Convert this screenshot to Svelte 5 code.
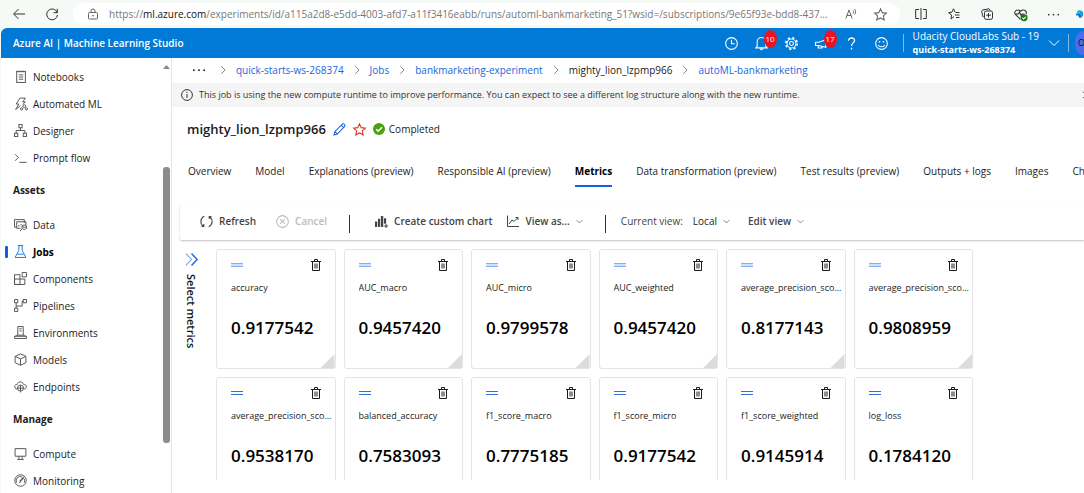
<script>
  const icons = {
    notebook: '<rect x="2.5" y="1.5" width="8" height="10"/><path d="M2.5 .8v1.2M4.5.5v1.5M6.500.5v1.5M8.500.5v1.5M10.5.8v1.2M4.500 4.500h4M4.500 6.500h4M4.500 8.500h4"/>',
    automl: '<path d="M5.500 1h5L8 4.500h2.500L8 7M5.500 1L2 6.500h2.500L1.500 11.500 6 8"/><circle cx="9.500" cy="8.500" r="1.300"/><circle cx="7" cy="11" r="1"/><circle cx="11.500" cy="11" r="1"/>',
    designer: '<rect x="4.500" y=".5" width="3" height="3"/><rect x=".5" y="8.500" width="3" height="3"/><rect x="8.500" y="8.500" width="3" height="3"/><path d="M6 3.500v2.500M2 8.500V6h8v2.500"/>',
    prompt: '<path d="M1 3l3 3-3 3M5 10.500h6.500"/>',
    data: '<path d="M2.500 8.500H.500v-7h9v3M2.500 3.500h8.500v3M2.500 3.500v6H6M4.500 8V6.500M6.500 7V5.500"/><ellipse cx="9.500" cy="7.500" rx="2" ry="1"/><path d="M7.500 7.500v2c0 1.300 4 1.300 4 0v-2M7.500 10L5.500 12"/>',
    jobs: '<path d="M3.500.500h5M4.500.500v4.500L1 11.500h10L7.500 5V.5M3 8.500h6"/>',
    components: '<path d="M.5 2.500h5v9h-5zM.5 6.500h9.500v5H.5zM7.500.500h4v4h-4z"/>',
    pipelines: '<path d="M.5.500h3v3h-3zM8.500.500h3v3h-3zM.5 8.500h3v3h-3zM2 3.500v5M2 6.500h5.500V2h1"/>',
    environments: '<path d="M3.500.500h5v8h-5zM5 2.500h2M5 4.500h2M3.500 8.500L1 9.500M8.500 8.500l2.500 1M.5 9.500h11v2H.5z"/>',
    models: '<path d="M6 .8l5 2.300v5.800L6 11.300 1 8.900V3.100zM1 3.100l5 2.400 5-2.400M6 5.500v5.800"/>',
    endpoints: '<path d="M3 8.500C-.2 8-.2 4.200 2.800 4.200 3.500 1 8 1 8.800 4c3.200 0 3.600 3.800.5 4.500"/><circle cx="6" cy="7.500" r="2.800"/><path d="M3.200 7.500h5.600M6 5v5M6 10.300v1.200"/>',
    compute: '<path d="M1 1.500h10v7H1zM4.500 8.500v2.500M7.500 8.500v2.500M3 11.500h6"/>',
    monitoring: '<circle cx="6" cy="6" r="5.300"/><path d="M2.500 8a3.800 3.800 0 0 1 5-5.300M9.400 4.500A3.800 3.800 0 0 1 9.500 8"/><path d="M5.500 7L9 3M5 7.500l1 .3" stroke-width="1.400"/>',
    back: '<path d="M12 6H.8M5.500 1L.7 6l4.800 5"/>',
    reload: '<path d="M11.200 4.500A5.400 5.400 0 1 0 11.500 7M11.300.8v3.900H7.500"/>',
    lock: '<rect x="1.500" y="4.500" width="9" height="6.500" rx="1"/><path d="M4 4.500V3a2 2 0 0 1 4 0v1.500"/><circle cx="6" cy="7.700" r=".5"/>',
    read: '<path d="M.8 10.500L4 2l3.200 8.500M2 7.500h4M8 2.500c.8.800.8 2 0 3M9.500 1c1.500 1.500 1.500 4 0 5.500"/>',
    star: '<path d="M6 .8l1.600 3.500 3.800.4-2.800 2.600.8 3.800L6 9.200l-3.400 1.900.8-3.800L.6 4.700l3.800-.4z"/>',
    split: '<path d="M6 0v12M4 1.500H.7v9H4M8 1.500h3.300v9H8"/>',
    favorites: '<path d="M6 8.500L3 11l.6-4L.6 4.700l3.400-.6L5.500.8l1.500 3.400M7.500 4.500h4M7 7h4.500M8 9.500h3.500"/>',
    collections: '<path d="M2.500 9H2L.7 3.500 1.500 2 8 .8l1.200 1.400"/><rect x="3.500" y="3" width="8" height="8.300" rx="1.500"/><path d="M7.500 5v4.500M5.200 7.200h4.600"/>',
    health: '<path d="M6 10.500L1.300 6C-.8 3.300 3 .3 6 3c3-2.700 6.500 0 5 2.600M1.500 5.500H4l1-1.700 1.500 3 1-1.300h2"/><circle cx="9.300" cy="9" r="3.200" fill="#0f7b10" stroke="none"/><path d="M7.800 9l1.100 1.100 2-2" stroke="#fff"/>',
    dots: '<g fill="currentColor" stroke="none"><rect x="0" y="5.400" width="1.600" height="1.600"/><rect x="5.200" y="5.400" width="1.600" height="1.600"/><rect x="10.400" y="5.400" width="1.600" height="1.600"/></g>',
    clock: '<circle cx="6" cy="6" r="5.400"/><path d="M6 2.500v3.800h3"/>',
    bell: '<path d="M.8 10h10.400L10 8.500V4.500a4 4 0 0 0-8 0v4zM4.500 10.200c.2 2 2.800 2 3 0"/>',
    gear: '<circle cx="6" cy="6" r="4.100"/><circle cx="6" cy="6" r="1.800"/><circle cx="6" cy="6" r="5.300" stroke-width="1.500" stroke-dasharray="2.080 2.080"/>',
    megaphone: '<path d="M.5 4.800h3L10 2.500v7L3.500 7.800h-3zM3 8v2.200h3.500V8.800"/>',
    help: '<path d="M3.200 3.500C3 .2 9 0 8.800 3.300 8.600 5.500 6 5.500 6 8.300M6 10v1.500" stroke-width="1.200"/>',
    smile: '<circle cx="6" cy="6" r="5.400"/><path d="M3 7.300c1 2.300 5 2.300 6 0"/><path d="M4.200 3.800v1.200M7.800 3.800v1.200" stroke-width="1.300"/>',
    down: '<path d="M1 3.500l5 5 5-5"/>',
    right: '<path d="M4 1.500L8.500 6 4 10.500"/>',
    info: '<circle cx="6" cy="6" r="5.400"/><path d="M6 5v4M6 2.800v1.200"/>',
    edit: '<path d="M1 11l.8-3.200L8.600 1c1-1 3.200.9 2.200 2.200L4 10.200zM7.500 2l2.500 2.500M1.800 7.800L4 10.200"/>',
    refresh: '<path d="M4 1.200A5.200 5.200 0 0 0 3 10.200M8 10.800A5.200 5.200 0 0 0 9 1.800M1.500 10.500h2V8.300M10.500 1.500h-2v2.300"/>',
    cancel: '<circle cx="6" cy="6" r="5.400"/><path d="M3.700 3.700l4.600 4.600M8.300 3.700L3.700 8.300"/>',
    chart: '<g fill="currentColor" stroke="none"><rect x="0" y="6" width="2" height="5"/><rect x="2.700" y="3.500" width="2" height="7.500"/><rect x="5.400" y="1" width="2.200" height="10"/><rect x="8.300" y="3" width="2" height="5"/></g><path d="M10.200 8.300v3.600M8.400 10.100H12"/>',
    line: '<path d="M.5.500v11H12M2 9l3-4 2 1.500L11 2.500M8.500 2.500H11V5"/>',
    trash: '<path d="M1 2.500h10M4.500 2.500v-2h3v2M2.500 2.500v9h7v-9M5 4.500v5M7 4.500v5"/>',
    expand: '<path d="M.8.500L6 6 .8 11.500" opacity=".6"/><path d="M6 .5L11.200 6 6 11.500" stroke-width="1.300"/>',
    close: '<path d="M1 1l10 10M11 1L1 11"/>'
  };

  const navGroups = [
    { items: [['notebook', 'Notebooks'], ['automl', 'Automated ML'], ['designer', 'Designer'], ['prompt', 'Prompt flow']] },
    {
      title: 'Assets',
      items: [['data', 'Data'], ['jobs', 'Jobs'], ['components', 'Components'], ['pipelines', 'Pipelines'], ['environments', 'Environments'], ['models', 'Models'], ['endpoints', 'Endpoints']]
    },
    { title: 'Manage', items: [['compute', 'Compute'], ['monitoring', 'Monitoring']] }
  ];

  const crumbs = [
    { text: 'quick-starts-ws-268374', link: true },
    { text: 'Jobs', link: true },
    { text: 'bankmarketing-experiment', link: true },
    { text: 'mighty_lion_lzpmp966', link: false },
    { text: 'autoML-bankmarketing', link: true }
  ];

  const tabs = ['Overview', 'Model', 'Explanations (preview)', 'Responsible AI (preview)', 'Metrics', 'Data transformation (preview)', 'Test results (preview)', 'Outputs + logs', 'Images', 'Ch'];
  let activeTab = $state('Metrics');

  const alerts = [['clock', 'Recent'], ['bell', 'Notifications', 10], ['gear', 'Settings'], ['megaphone', 'Announcements', 17], ['help', 'Help'], ['smile', 'Feedback']];

  const metrics = [
    ['accuracy', '0.9177542'],
    ['AUC_macro', '0.9457420'],
    ['AUC_micro', '0.9799578'],
    ['AUC_weighted', '0.9457420'],
    ['average_precision_sco...', '0.8177143'],
    ['average_precision_sco...', '0.9808959'],
    ['average_precision_sco...', '0.9538170'],
    ['balanced_accuracy', '0.7583093'],
    ['f1_score_macro', '0.7775185'],
    ['f1_score_micro', '0.9177542'],
    ['f1_score_weighted', '0.9145914'],
    ['log_loss', '0.1784120']
  ];
</script>

{#snippet icon(name, size = 12)}
  <svg class="icon" width={size} height={size} viewBox="0 0 12 12" aria-hidden="true">{@html icons[name]}</svg>
{/snippet}

<div class="page">
  <div class="browser">
    <button class="bare" aria-label="Back">{@render icon('back')}</button>
    <button class="bare" aria-label="Reload">{@render icon('reload')}</button>
    <div class="address">
      {@render icon('lock')}
      <span class="url">https://<b>ml.azure.com</b>/experiments/id/a115a2d8-e5dd-4003-afd7-a11f3416eabb/runs/automl-bankmarketing_51?wsid=/subscriptions/9e65f93e-bdd8-437...</span>
      <button class="bare" aria-label="Read aloud">{@render icon('read')}</button>
      <button class="bare" aria-label="Add to favorites">{@render icon('star', 13)}</button>
    </div>
    <div class="tools">
      <button class="bare" aria-label="Split screen">{@render icon('split')}</button>
      <button class="bare" aria-label="Favorites">{@render icon('favorites')}</button>
      <button class="bare" aria-label="Collections">{@render icon('collections')}</button>
      <button class="bare" aria-label="Browser essentials">{@render icon('health', 13)}</button>
      <button class="bare" aria-label="More">{@render icon('dots', 11)}</button>
    </div>
    <button class="bare copilot" aria-label="Copilot">
      <svg width="18" height="18" viewBox="0 0 18 18" aria-hidden="true">
        <path d="M5 1h7l4 4v8l-4 4H7z" fill="#12a5d8" />
        <path d="M5 1C2 3 1 8 .5 12H6L9 2z" fill="#2bc4a0" />
        <path d="M.5 9L0 12h5l2 5h5l-3-8z" fill="#1b5fd6" />
        <path d="M5 1l5 0-3 8H1z" fill="#21c0c8" />
      </svg>
    </button>
  </div>

  <div class="app">
    <header>
      <strong class="brand">Azure AI | Machine Learning Studio</strong>
      <div class="alerts">
        {#each alerts as [name, label, count]}
          <button class="bare alert" aria-label={label}>
            {@render icon(name, 13)}
            {#if count}<span class="badge">{count}</span>{/if}
          </button>
        {/each}
      </div>
      <button class="bare workspace">
        <span class="names"><span>Udacity CloudLabs Sub - 19</span><b>quick-starts-ws-268374</b></span>
        {@render icon('down')}
      </button>
      <button class="bare avatar" aria-label="Account">O</button>
    </header>

    <div class="body">
      <aside>
        <nav>
          {#each navGroups as group}
            {#if group.title}<h2>{group.title}</h2>{/if}
            {#each group.items as [name, label]}
              <a href="#{name}" class:current={label === 'Jobs'}>{@render icon(name, 13)}{label}</a>
            {/each}
          {/each}
        </nav>
        <div class="scrollbar" aria-hidden="true">
          <svg width="7" height="4" viewBox="0 0 7 4"><path d="M0 4L3.500 0 7 4z" fill="#8a8a8a" /></svg>
          <div class="track"><div class="thumb"></div></div>
        </div>
      </aside>

      <main>
        <div class="crumbs">
          <button class="bare" aria-label="More levels">{@render icon('dots')}</button>
          {#each crumbs as crumb}
            {@render icon('right', 10)}
            {#if crumb.link}<a href="#{crumb.text}">{crumb.text}</a>{:else}<span>{crumb.text}</span>{/if}
          {/each}
        </div>

        <div class="notice">
          {@render icon('info')}
          <span>This job is using the new compute runtime to improve performance. You can expect to see a different log structure along with the new runtime.</span>
          <button class="bare" aria-label="Dismiss">{@render icon('close', 8)}</button>
        </div>

        <div class="title">
          <h1>mighty_lion_lzpmp966</h1>
          <button class="bare blue" aria-label="Rename">{@render icon('edit', 13)}</button>
          <button class="bare red" aria-label="Favorite">{@render icon('star', 13)}</button>
          <span class="status">
            <svg width="12" height="12" viewBox="0 0 12 12" aria-hidden="true">
              <circle cx="6" cy="6" r="6" fill="#4ba30c" />
              <path d="M3.200 6.200l2 2L9 4.300" fill="none" stroke="#fff" stroke-width="1.600" />
            </svg>
            Completed
          </span>
        </div>

        <div class="tabs" role="tablist">
          {#each tabs as tab}
            <button class="bare tab" role="tab" aria-selected={tab === activeTab} onclick={() => (activeTab = tab)}>{tab}</button>
          {/each}
        </div>

        <div class="toolbar">
          <button class="bare">{@render icon('refresh', 13)}Refresh</button>
          <button class="bare cancel" disabled>{@render icon('cancel', 13)}Cancel</button>
          <span class="rule"></span>
          <button class="bare create">{@render icon('chart', 13)}Create custom chart</button>
          <button class="bare view">{@render icon('line')}View as...{@render icon('down', 7)}</button>
          <span class="rule"></span>
          <span class="current-view">Current view:</span>
          <button class="bare local">Local{@render icon('down', 7)}</button>
          <button class="bare edit-view">Edit view{@render icon('down', 7)}</button>
        </div>

        <div class="content">
          <button class="bare selector">{@render icon('expand', 13)}<span>Select metrics</span></button>
          <div class="cards">
            {#each metrics as [name, value], i}
              <article>
                <div class="card-top">
                  <span class="handle" class:soft={i < 6}></span>
                  <button class="bare" aria-label="Remove {name}">{@render icon('trash', 12)}</button>
                </div>
                <h3>{name}</h3>
                <p>{value}</p>
                <span class="corner"></span>
              </article>
            {/each}
          </div>
        </div>
      </main>
    </div>
  </div>
</div>

<style>
  :global(body) {
    margin: 0;
    background: #f5faf7;
  }
  .page {
    display: flex;
    flex-direction: column;
    height: 100vh;
    overflow: hidden;
    font: 10px/14px "Open Sans", "Noto Sans", sans-serif;
    color: #1b1b1b;
  }
  .page :global(*) {
    box-sizing: border-box;
  }
  .bare {
    display: inline-flex;
    align-items: center;
    flex: none;
    padding: 0;
    border: 0;
    background: none;
    font: inherit;
    color: inherit;
    white-space: nowrap;
  }
  .icon {
    flex: none;
    fill: none;
    stroke: currentColor;
    overflow: visible;
  }
  a {
    text-decoration: none;
  }

  .browser {
    display: flex;
    align-items: center;
    flex: none;
    height: 28px;
    gap: 21px;
    padding-left: 13px;
    color: #333;
  }
  .address {
    display: flex;
    align-items: center;
    flex: 1;
    min-width: 0;
    height: 22px;
    margin-left: -6px;
    padding: 0 13px 0 14px;
    border-radius: 11px;
    background: #fff;
    color: #666;
    gap: 17px;
  }
  .url {
    flex: 1;
    margin-left: -7px;
    overflow: hidden;
    font-size: 11px;
    white-space: nowrap;
    color: #777;
    font-size: 10px;
  }
  .url b {
    font-weight: 400;
    color: #111;
  }
  .tools {
    display: flex;
    gap: 21px;
    margin-left: -6px;
  }
  .copilot {
    justify-content: flex-start;
    width: 8px;
    margin-left: -4px;
    overflow: hidden;
  }

  .app {
    display: flex;
    flex-direction: column;
    flex: 1;
    min-height: 0;
    margin-left: 1px;
    border-radius: 6px 0 0 0;
    overflow: hidden;
    background: #fff;
  }
  header {
    display: flex;
    align-items: center;
    flex: none;
    height: 30px;
    padding-left: 12px;
    background: #007ad6;
    color: #fff;
  }
  .brand {
    flex: 1;
    font-weight: 600;
  }
  .alerts {
    display: flex;
  }
  .alert {
    position: relative;
    justify-content: center;
    width: 30px;
    height: 30px;
  }
  .badge {
    position: absolute;
    top: 2px;
    right: 0;
    width: 13px;
    height: 18px;
    border-radius: 50%;
    background: #ee1122;
    font-size: 8px;
    line-height: 18px;
    text-align: center;
  }
  .workspace {
    gap: 9px;
    height: 18px;
    margin-left: 6px;
    padding: 0 8px 0 9px;
    border: solid #7fb9e8;
    border-width: 0 1px;
  }
  .names {
    display: flex;
    flex-direction: column;
    text-align: left;
  }
  .names b {
    font-size: 9px;
  }
  .avatar {
    justify-content: flex-start;
    width: 9px;
    height: 24px;
    margin-left: 6px;
    padding-left: 3px;
    border-radius: 12px 0 0 12px;
    background: #4f6bed;
    color: #111;
    font-size: 9px;
    overflow: hidden;
  }

  .body {
    display: flex;
    flex: 1;
    min-height: 0;
  }
  aside {
    display: flex;
    flex: none;
    width: 171px;
    overflow: hidden;
    border-right: 1px solid #e3e6e6;
  }
  nav {
    flex: 1;
    padding-top: 5px;
  }
  nav a {
    display: flex;
    align-items: center;
    gap: 6px;
    height: 27px;
    padding-left: 13px;
    color: #1b1b1b;
  }
  nav a .icon {
    color: #555;
    stroke-width: 0.9;
  }
  nav a.current {
    padding-left: 4px;
    font-weight: 700;
    color: #000;
  }
  nav a.current .icon {
    color: #1a7fd6;
  }
  nav a.current::before {
    content: "";
    width: 3px;
    height: 12px;
    border-radius: 1px;
    background: #0f5fe0;
  }
  h2 {
    height: 40px;
    margin: 0;
    padding-left: 12px;
    font-size: 10px;
    font-weight: 700;
    line-height: 39px;
  }
  .scrollbar {
    display: flex;
    flex-direction: column;
    align-items: center;
    width: 9px;
    padding-top: 7px;
  }
  .track {
    display: flex;
    flex-direction: column;
    flex: 1;
    width: 7px;
  }
  .track::before {
    content: "";
    flex: 98;
  }
  .track::after {
    content: "";
    flex: 50;
  }
  .thumb {
    flex: 276;
    border-radius: 3px;
    background: #8b8b8b;
  }

  main {
    display: flex;
    flex-direction: column;
    flex: 1;
    min-width: 0;
    overflow: hidden;
    padding-bottom: 13px;
  }
  .crumbs {
    display: flex;
    align-items: center;
    flex: none;
    gap: 8px;
    height: 25px;
    padding: 0 0 2px 21px;
    white-space: nowrap;
  }
  .crumbs > .icon {
    color: #666;
  }
  .crumbs .bare {
    margin-right: 5px;
  }
  .crumbs a {
    color: #1a66dc;
  }
  .notice {
    display: flex;
    align-items: center;
    flex: none;
    gap: 6px;
    height: 24px;
    padding-left: 9px;
    background: #f5f5f5;
    font-size: 9px;
    color: #333;
  }
  .notice span {
    flex: 1;
    white-space: nowrap;
  }
  .notice .bare {
    width: 2px;
    overflow: hidden;
  }
  .title {
    display: flex;
    align-items: center;
    flex: none;
    gap: 7px;
    height: 44px;
    padding-left: 15px;
  }
  h1 {
    margin: 0;
    font-size: 13px;
    font-weight: 600;
  }
  .blue {
    color: #1a66dc;
  }
  .red {
    color: #d13a1e;
  }
  .status {
    display: flex;
    align-items: center;
    gap: 4px;
  }
  .tabs {
    display: flex;
    flex: none;
    gap: 24px;
    height: 36px;
    padding-left: 16px;
    overflow: hidden;
  }
  .tab {
    height: 36px;
    padding: 6px 0 1px;
    border-bottom: 2px solid transparent;
  }
  .tab[aria-selected="true"] {
    border-color: #0f62e0;
    font-weight: 700;
    color: #000;
  }
  .toolbar {
    display: flex;
    align-items: center;
    flex: none;
    height: 36px;
    margin: 17px 0 9px 8px;
    padding: 0 0 2px 20px;
    border-radius: 2px 0 0 2px;
    box-shadow: 0 1px 2px rgba(0, 0, 0, 0.24);
    font-weight: 600;
    color: #444;
  }
  .toolbar .bare {
    gap: 6px;
  }
  .toolbar .cancel {
    margin-left: 20px;
    color: #bbb;
  }
  .rule {
    width: 1px;
    height: 18px;
    margin: 5px 0 0 22px;
    background: #333;
  }
  .toolbar .create {
    margin-left: 25px;
  }
  .toolbar .view {
    margin-left: 15px;
  }
  .current-view {
    margin-left: 15px;
    font-weight: 400;
  }
  .toolbar .local {
    margin-left: 10px;
    font-weight: 400;
    color: #222;
  }
  .toolbar .edit-view {
    margin-left: 18px;
  }
  .content {
    display: flex;
    align-items: flex-start;
    flex: 1;
    min-height: 0;
    overflow: hidden;
  }
  .selector {
    flex-direction: column;
    gap: 8px;
    width: 44px;
    padding: 4px 6px 0 0;
    color: #1a66dc;
  }
  .selector span {
    writing-mode: vertical-rl;
    font-size: 11px;
    font-weight: 600;
    color: #111;
  }
  .cards {
    display: grid;
    grid-template-columns: repeat(6, 1fr);
    gap: 8px;
    flex: 1;
    max-width: 757px;
  }
  article {
    position: relative;
    min-width: 0;
    height: 120px;
    padding: 8px 3px 0 14px;
    border: 1px solid #e4e4e4;
    border-radius: 3px;
  }
  .card-top {
    display: flex;
    align-items: center;
    justify-content: space-between;
    height: 13px;
    padding-right: 10px;
  }
  .handle {
    width: 12px;
    height: 4px;
    border: solid #2a72d8;
    border-width: 1px 0;
  }
  .handle.soft {
    border-color: #85aef0;
    background: #d0e0fa;
  }
  h3 {
    margin: 10px 0 0;
    overflow: hidden;
    font-size: 9px;
    font-weight: 400;
    line-height: 14px;
    white-space: nowrap;
  }
  p {
    margin: 20px 0 0;
    font-size: 17px;
    font-weight: 600;
    line-height: 26px;
    color: #000;
  }
  .corner {
    position: absolute;
    right: 0;
    bottom: 0;
    width: 14px;
    height: 14px;
    background: #dcdcdc;
    clip-path: polygon(100% 0, 100% 100%, 0 100%);
  }
</style>
